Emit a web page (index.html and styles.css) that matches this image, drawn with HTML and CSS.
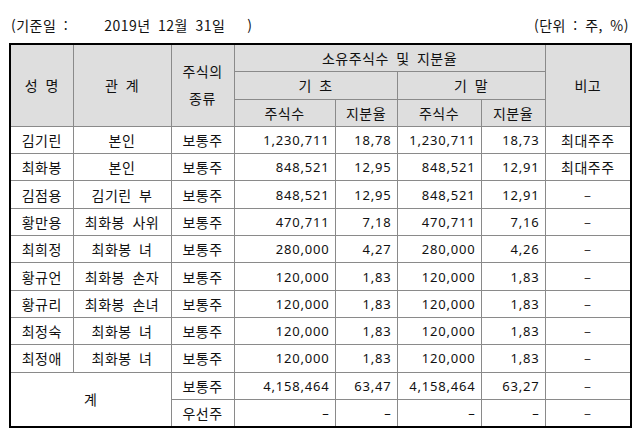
FILE: index.html
```html
<!DOCTYPE html>
<html lang="ko">
<head>
<meta charset="utf-8">
<link rel="stylesheet" href="styles.css">
</head>
<body>
<div class="caption">
  <div class="caption-left"><span>(기준일 :</span><span class="date">2019년 12월 31일</span><span class="close">)</span></div>
  <div class="caption-right">(단위 : 주, %)</div>
</div>
<table class="holders">
  <colgroup>
    <col class="c1"><col class="c2"><col class="c3"><col class="c4"><col class="c5"><col class="c6"><col class="c7"><col class="c8">
  </colgroup>
  <thead>
    <tr>
      <th rowspan="3">성 명</th>
      <th rowspan="3">관 계</th>
      <th rowspan="3" class="two">주식의<br>종류</th>
      <th colspan="4">소유주식수 및 지분율</th>
      <th rowspan="3">비고</th>
    </tr>
    <tr>
      <th colspan="2">기 초</th>
      <th colspan="2">기 말</th>
    </tr>
    <tr>
      <th>주식수</th><th>지분율</th><th>주식수</th><th>지분율</th>
    </tr>
  </thead>
  <tbody>
    <tr><td>김기린</td><td>본인</td><td>보통주</td><td class="n">1,230,711</td><td class="n">18,78</td><td class="n">1,230,711</td><td class="n">18,73</td><td>최대주주</td></tr>
    <tr><td>최화봉</td><td>본인</td><td>보통주</td><td class="n">848,521</td><td class="n">12,95</td><td class="n">848,521</td><td class="n">12,91</td><td>최대주주</td></tr>
    <tr><td>김점용</td><td>김기린 부</td><td>보통주</td><td class="n">848,521</td><td class="n">12,95</td><td class="n">848,521</td><td class="n">12,91</td><td class="d">–</td></tr>
    <tr><td>황만용</td><td>최화봉 사위</td><td>보통주</td><td class="n">470,711</td><td class="n">7,18</td><td class="n">470,711</td><td class="n">7,16</td><td class="d">–</td></tr>
    <tr><td>최희정</td><td>최화봉 녀</td><td>보통주</td><td class="n">280,000</td><td class="n">4,27</td><td class="n">280,000</td><td class="n">4,26</td><td class="d">–</td></tr>
    <tr><td>황규언</td><td>최화봉 손자</td><td>보통주</td><td class="n">120,000</td><td class="n">1,83</td><td class="n">120,000</td><td class="n">1,83</td><td class="d">–</td></tr>
    <tr><td>황규리</td><td>최화봉 손녀</td><td>보통주</td><td class="n">120,000</td><td class="n">1,83</td><td class="n">120,000</td><td class="n">1,83</td><td class="d">–</td></tr>
    <tr><td>최정숙</td><td>최화봉 녀</td><td>보통주</td><td class="n">120,000</td><td class="n">1,83</td><td class="n">120,000</td><td class="n">1,83</td><td class="d">–</td></tr>
    <tr><td>최정애</td><td>최화봉 녀</td><td>보통주</td><td class="n">120,000</td><td class="n">1,83</td><td class="n">120,000</td><td class="n">1,83</td><td class="d">–</td></tr>
    <tr><td colspan="2" rowspan="2">계</td><td>보통주</td><td class="n">4,158,464</td><td class="n">63,47</td><td class="n">4,158,464</td><td class="n">63,27</td><td class="d">–</td></tr>
    <tr><td>우선주</td><td class="n">–</td><td class="n">–</td><td class="n">–</td><td class="n">–</td><td class="d">–</td></tr>
  </tbody>
</table>
</body>
</html>
```
FILE: styles.css
```css
html, body {
  margin: 0;
  padding: 0;
  background: #ffffff;
}
body {
  font-family: "Noto Sans CJK KR", "Noto Sans", sans-serif;
  font-size: 14px;
  letter-spacing: 0.5px;
  word-spacing: 3px;
  color: #111111;
}
.caption {
  display: flex;
  justify-content: space-between;
  align-items: center;
  height: 18px;
  padding: 16px 9px 9px 11px;
  line-height: 18px;
}
.caption-left .date {
  margin-left: 36px;
}
.caption-left .close {
  margin-left: 22px;
}
.holders {
  margin-left: 9px;
  border-collapse: collapse;
  table-layout: fixed;
  width: 621px;
  border: 2px solid #000000;
}
.c1 { width: 63px; }
.c2 { width: 98px; }
.c3 { width: 63px; }
.c4 { width: 101px; }
.c5 { width: 62px; }
.c6 { width: 84px; }
.c7 { width: 64px; }
.c8 { width: 86px; }
.holders th, .holders td {
  border: 1px solid #8a8a8a;
  height: 26.3px;
  padding: 0 2px;
  text-align: center;
  vertical-align: middle;
  font-weight: normal;
  line-height: 16px;
  white-space: nowrap;
}
.holders th {
  background: #dedede;
}
.holders th.two {
  line-height: 27px;
}
.holders td.n {
  text-align: right;
  padding-right: 5px;
  font-family: "Noto Sans", sans-serif;
  font-variant-numeric: tabular-nums;
  font-size: 13px;
  letter-spacing: 0.8px;
}
.holders td.d {
  font-size: 13px;
}
```
